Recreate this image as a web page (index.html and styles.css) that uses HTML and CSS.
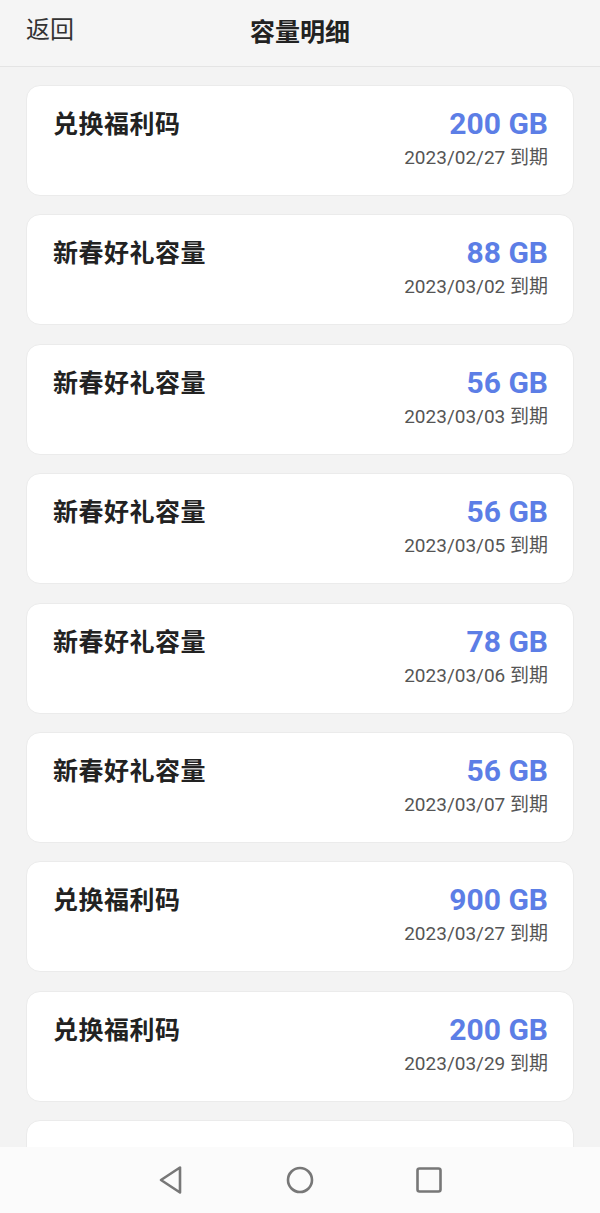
FILE: index.html
```html
<!DOCTYPE html>
<html lang="zh-CN">
<head>
  <meta charset="UTF-8" />
  <title>容量明细</title>
  <meta name="viewport" content="width=device-width, initial-scale=1" />
  <link rel="stylesheet" href="styles.css">
</head>
<body>
  <div class="header">
    <span class="back">返回</span>
    <h1 class="title">容量明细</h1>
  </div>

  <div class="list">
    <div class="card">
      <div class="name">兑换福利码</div>
      <div class="info">
        <div class="size">200 GB</div>
        <div class="date">2023/02/27 到期</div>
      </div>
    </div>
    <div class="card">
      <div class="name">新春好礼容量</div>
      <div class="info">
        <div class="size">88 GB</div>
        <div class="date">2023/03/02 到期</div>
      </div>
    </div>
    <div class="card">
      <div class="name">新春好礼容量</div>
      <div class="info">
        <div class="size">56 GB</div>
        <div class="date">2023/03/03 到期</div>
      </div>
    </div>
    <div class="card">
      <div class="name">新春好礼容量</div>
      <div class="info">
        <div class="size">56 GB</div>
        <div class="date">2023/03/05 到期</div>
      </div>
    </div>
    <div class="card">
      <div class="name">新春好礼容量</div>
      <div class="info">
        <div class="size">78 GB</div>
        <div class="date">2023/03/06 到期</div>
      </div>
    </div>
    <div class="card">
      <div class="name">新春好礼容量</div>
      <div class="info">
        <div class="size">56 GB</div>
        <div class="date">2023/03/07 到期</div>
      </div>
    </div>
    <div class="card">
      <div class="name">兑换福利码</div>
      <div class="info">
        <div class="size">900 GB</div>
        <div class="date">2023/03/27 到期</div>
      </div>
    </div>
    <div class="card">
      <div class="name">兑换福利码</div>
      <div class="info">
        <div class="size">200 GB</div>
        <div class="date">2023/03/29 到期</div>
      </div>
    </div>
    <!-- следующая карточка уходит под навигацию -->
    <div class="card"></div>
  </div>

  <div class="navbar">
    <svg class="nav-icon" width="28" height="30" viewBox="0 0 28 30">
      <path d="M23 2.5 L23 27.5 L4 15 Z" fill="none" stroke="#777" stroke-width="2.6" stroke-linejoin="round"/>
    </svg>
    <svg class="nav-icon" width="30" height="30" viewBox="0 0 30 30">
      <circle cx="15" cy="15" r="12" fill="none" stroke="#777" stroke-width="2.6"/>
    </svg>
    <svg class="nav-icon" width="28" height="30" viewBox="0 0 28 30">
      <rect x="2.5" y="3.5" width="23" height="23" rx="2" fill="none" stroke="#777" stroke-width="2.6"/>
    </svg>
  </div>
</body>
</html>
```

FILE: styles.css
```css
body {
  margin: 0;
  padding: 0;
  height: 1213px;
  overflow: hidden;
  background: #f3f3f3;
  font-family: Roboto, "Noto Sans CJK SC", sans-serif;
  color: #222;
}

.header {
  height: 66px;
  display: flex;
  align-items: center;
  justify-content: center;
  position: relative;
  background: #f5f5f5;
  border-bottom: 1px solid #e4e4e4;
}

.back {
  position: absolute;
  left: 26px;
  top: 14px;
  font-size: 24px;
  line-height: 32px;
  color: #333;
}

.title {
  margin: 0;
  margin-top: -6px;
  font-size: 25px;
  font-weight: bold;
  color: #222;
}

.list {
  padding: 18px 26px 0 26px;
  display: flex;
  flex-direction: column;
  gap: 18.4px;
}

.card {
  height: 111px;
  flex-shrink: 0;
  box-sizing: border-box;
  background: white;
  border: 1px solid #ebebeb;
  border-radius: 14px;
  padding: 21px 25px 0 26px;
  display: flex;
  justify-content: space-between;
  align-items: flex-start;
}

.name {
  font-family: "Noto Sans CJK SC", sans-serif;
  font-size: 25px;
  line-height: 30px;
  font-weight: bold;
  letter-spacing: 0.5px;
  color: #222;
}

.info {
  display: flex;
  flex-direction: column;
  align-items: flex-end;
}

.size {
  font-size: 30px;
  line-height: 34px;
  font-weight: bold;
  color: #5c7ee6;
}

.date {
  margin-top: 4px;
  font-size: 19px;
  line-height: 25px;
  color: #555;
}

.navbar {
  position: fixed;
  left: 0;
  right: 0;
  bottom: 0;
  height: 66px;
  background: #fbfbfb;
  display: flex;
  align-items: center;
  justify-content: center;
  gap: 100px;
}

.nav-icon {
  display: block;
}
```
